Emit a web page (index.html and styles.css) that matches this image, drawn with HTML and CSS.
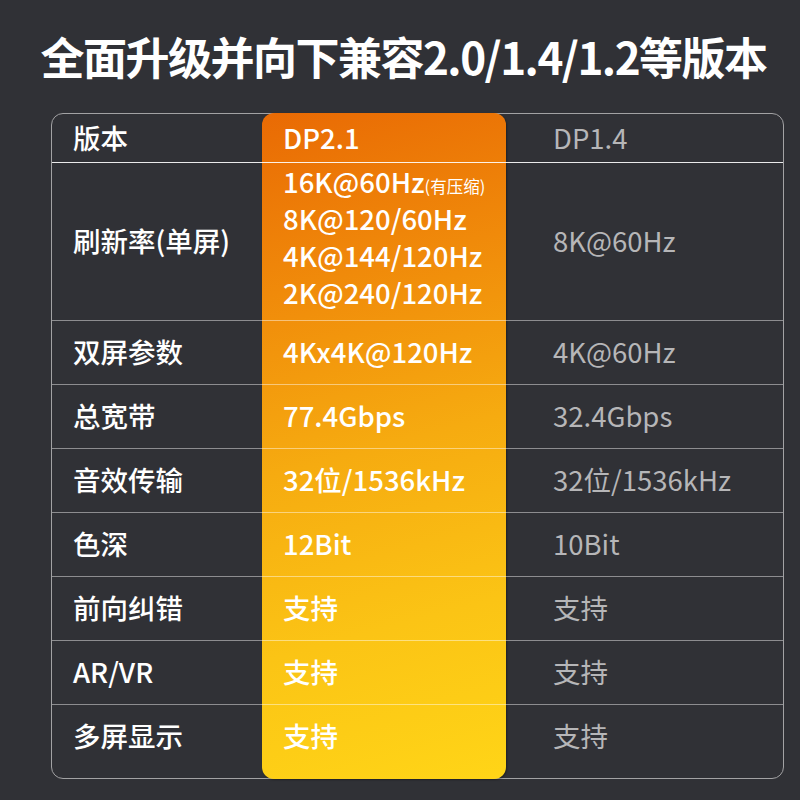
FILE: index.html
```html
<!DOCTYPE html>
<html lang="zh">
<head>
<meta charset="utf-8">
<link rel="stylesheet" href="styles.css">
</head>
<body>
<div class="page">
  <h1 class="title">全面升级并向下兼容2.0/1.4/1.2等版本</h1>
  <div class="table">
    <div class="hl"></div>

    <div class="cell label head r1">版本</div>
    <div class="cell new head r1">DP2.1</div>
    <div class="cell old head r1">DP1.4</div>

    <div class="cell label r2">刷新率(单屏)</div>
    <div class="cell new multi r2">
      <span class="line">16K@60Hz<small>(有压缩)</small></span>
      <span class="line">8K@120/60Hz</span>
      <span class="line">4K@144/120Hz</span>
      <span class="line">2K@240/120Hz</span>
    </div>
    <div class="cell old r2">8K@60Hz</div>

    <div class="cell label r3">双屏参数</div>
    <div class="cell new r3">4Kx4K@120Hz</div>
    <div class="cell old r3">4K@60Hz</div>

    <div class="cell label r4">总宽带</div>
    <div class="cell new r4">77.4Gbps</div>
    <div class="cell old r4">32.4Gbps</div>

    <div class="cell label r5">音效传输</div>
    <div class="cell new r5">32位/1536kHz</div>
    <div class="cell old r5">32位/1536kHz</div>

    <div class="cell label r6">色深</div>
    <div class="cell new r6">12Bit</div>
    <div class="cell old r6">10Bit</div>

    <div class="cell label r7">前向纠错</div>
    <div class="cell new r7">支持</div>
    <div class="cell old r7">支持</div>

    <div class="cell label r8">AR/VR</div>
    <div class="cell new r8">支持</div>
    <div class="cell old r8">支持</div>

    <div class="cell label last r9">多屏显示</div>
    <div class="cell new last r9">支持</div>
    <div class="cell old last r9">支持</div>
  </div>
</div>
</body>
</html>
```

FILE: styles.css
```css
html, body {
  margin: 0;
  padding: 0;
  background: #303136;
}

.page {
  width: 800px;
  height: 800px;
  background: #303136;
  font-family: "Noto Sans CJK SC", "Noto Sans", sans-serif;
  color: #ffffff;
  display: flex;
  flex-direction: column;
  align-items: flex-start;
}

.title {
  flex-shrink: 0;
  align-self: stretch;
  margin: 0;
  height: 113px;
  display: flex;
  align-items: center;
  justify-content: center;
  padding: 0 0 2px 7px;
  box-sizing: border-box;
  font-size: 44px;
  font-weight: 700;
  letter-spacing: -1.5px;
  white-space: nowrap;
}

.table {
  flex-shrink: 0;
  width: 733px;
  margin-left: 51px;
  box-sizing: border-box;
  border: 1px solid #a2a2a4;
  border-radius: 12px;
  display: grid;
  grid-template-columns: 210px 244px 1fr;
  grid-template-rows: 49px 158px repeat(6, 64px) 73px;
}

.hl {
  grid-column: 2;
  grid-row: 1 / -1;
  margin: -1px 0;
  border-radius: 12px;
  background: linear-gradient(165deg, #e96a04 0%, #f08a0a 25%, #f6ab10 50%, #fbc415 75%, #ffd517 100%);
  box-shadow: 1px 1px 2px rgba(0, 0, 0, 0.35);
}

.r1 { grid-row: 1; }
.r2 { grid-row: 2; }
.r3 { grid-row: 3; }
.r4 { grid-row: 4; }
.r5 { grid-row: 5; }
.r6 { grid-row: 6; }
.r7 { grid-row: 7; }
.r8 { grid-row: 8; }
.r9 { grid-row: 9; }

.cell {
  display: flex;
  align-items: center;
  box-sizing: border-box;
  border-bottom: 1px solid rgba(255, 255, 255, 0.45);
  font-size: 27.5px;
  line-height: 37px;
  white-space: nowrap;
  padding-bottom: 3px;
}

.cell.head {
  border-bottom-color: rgba(255, 255, 255, 0.9);
  padding-bottom: 2px;
}

.cell.last {
  border-bottom: none;
  padding-bottom: 13px;
}

.label {
  grid-column: 1;
  padding-left: 21px;
  font-weight: 500;
  color: #ffffff;
}

.new {
  grid-column: 2;
  padding-left: 21px;
  font-weight: 500;
  color: #ffffff;
}

.old {
  grid-column: 3;
  padding-left: 47px;
  font-weight: 400;
  color: #b6b6b8;
}

.multi {
  flex-direction: column;
  align-items: flex-start;
  justify-content: flex-start;
  padding-top: 0;
  padding-bottom: 0;
}

.multi .line {
  display: block;
  height: 37px;
  line-height: 37px;
}

.multi small {
  font-size: 16.5px;
  line-height: 1;
  font-weight: 400;
}
```
